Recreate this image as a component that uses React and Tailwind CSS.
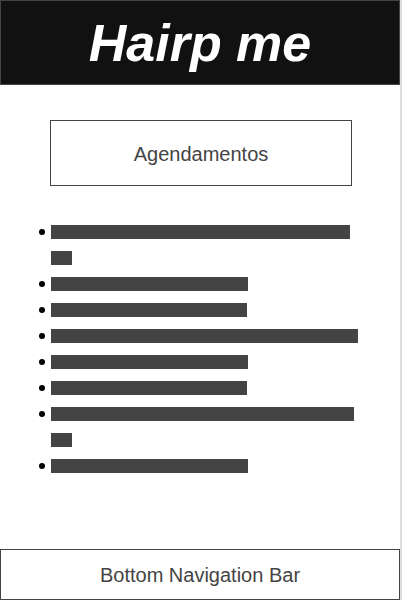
export default function App() {
  const items = [
    [299, 21],
    [197],
    [196],
    [307],
    [197],
    [196],
    [303, 21],
    [197],
  ];
  return (
    <div className="w-[402px] h-[600px] bg-[#dddddd]" style={{ fontFamily: '"Liberation Sans", Arial, sans-serif' }}>
      <div className="w-[400px] h-[600px] bg-white flex flex-col">
        <header className="h-[85px] bg-[#111111] border border-[#444444] flex items-center justify-center">
          <h1 className="text-white font-bold italic text-[52px] leading-none">Hairp me</h1>
        </header>
        <div className="flex mt-[35px] pl-[50px]">
          <div className="w-[302px] h-[66px] border border-[#444444] flex items-center justify-center text-[20px] text-[#444444] pt-[1px]">
            Agendamentos
          </div>
        </div>
        <ul className="mt-[33px] pl-[39px] flex flex-col">
          {items.map((lines, i) => (
            <li key={i} className="flex gap-[6px]">
              <div className="h-[26px] flex items-center">
                <span className="w-[6px] h-[6px] rounded-full bg-black" />
              </div>
              <div className="flex flex-col">
                {lines.map((w, j) => (
                  <div key={j} className="h-[26px] flex items-center">
                    <div className="h-[14px] bg-[#444444]" style={{ width: w }} />
                  </div>
                ))}
              </div>
            </li>
          ))}
        </ul>
        <footer className="mt-auto h-[51px] border border-[#444444] flex items-center justify-center text-[20px] text-[#444444]">
          Bottom Navigation Bar
        </footer>
      </div>
    </div>
  );
}
